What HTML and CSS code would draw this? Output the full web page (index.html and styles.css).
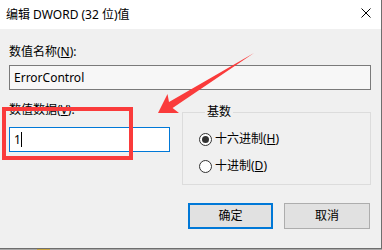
FILE: index.html
```html
<!DOCTYPE html>
<html lang="zh-CN">
<head>
<meta charset="utf-8">
<title>编辑 DWORD (32 位)值</title>
<link rel="stylesheet" href="styles.css">
</head>
<body>
<div class="window">
  <div class="titlebar">
    <span class="title">编辑 DWORD (32 位)值</span>
    <svg class="close" width="10" height="10" viewBox="0 0 10 10" aria-label="关闭"><path d="M0.5 0.5L9.5 9.5M9.5 0.5L0.5 9.5" stroke="#000" stroke-width="1" fill="none"/></svg>
  </div>
  <div class="content">
    <div class="label">数值名称(<u>N</u>):</div>
    <div class="textbox readonly">ErrorControl</div>
    <div class="row">
      <div class="col-left">
        <div class="label">数值数据(<u>V</u>):</div>
        <div class="textbox active"><span>1</span><span class="caret"></span></div>
      </div>
      <fieldset class="group">
        <legend>基数</legend>
        <label class="radio"><input type="radio" name="base" checked><span>十六进制(<u>H</u>)</span></label>
        <label class="radio"><input type="radio" name="base"><span>十进制(<u>D</u>)</span></label>
      </fieldset>
    </div>
    <div class="buttons">
      <button class="btn default">确定</button>
      <button class="btn">取消</button>
    </div>
  </div>
</div>
<div class="desk"><span class="desk-item"></span></div>
<div class="highlight"></div>
<svg class="arrow" width="382" height="250" viewBox="0 0 382 250">
  <polygon points="158,113 167.5,94 169,102 254,53 172.6,108 179,113" fill="#fa3b3b"/>
</svg>
</body>
</html>
```
FILE: styles.css
```css
html, body {
  margin: 0;
  padding: 0;
}
body {
  width: 382px;
  height: 250px;
  overflow: hidden;
  position: relative;
  background: #a8a8a8;
  font-family: "Noto Sans", "Noto Sans CJK SC", sans-serif;
  font-size: 12px;
  line-height: 16px;
  color: #000;
}
.window {
  width: 381px;
  height: 248px;
  border-right: 1px solid #6e6e6e;
  border-bottom: 1px solid #6e6e6e;
  background: #f0f0f0;
  display: flex;
  flex-direction: column;
}
.titlebar {
  height: 29px;
  flex: none;
  background: #fff;
  display: flex;
  align-items: center;
  justify-content: space-between;
  padding: 0 10px 0 6px;
}
.close {
  margin-bottom: 3px;
}
.content {
  padding: 15px 10px 0 9px;
  display: flex;
  flex-direction: column;
}
.label {
  height: 16px;
}
.textbox {
  box-sizing: border-box;
  height: 25px;
  border: 1px solid #7a7a7a;
  padding-left: 4px;
  display: flex;
  align-items: center;
  margin-top: 5px;
}
.textbox.readonly {
  background: #f7f7f7;
}
.textbox.active {
  border-color: #0078d7;
  background: #fff;
  margin-top: 9px;
}
.caret {
  width: 1px;
  height: 15px;
  background: #000;
  margin-left: 0;
}
.row {
  display: flex;
  gap: 12px;
  margin-top: 12px;
  align-items: flex-start;
}
.col-left {
  width: 161px;
  flex: none;
}
.group {
  flex: 1;
  box-sizing: border-box;
  height: 81px;
  margin: 2px 0 0 0;
  padding: 11px 0 0 16px;
  border: 1px solid #dcdcdc;
  min-width: 0;
}
.group legend {
  padding: 0 2px;
  margin-left: 6px;
  line-height: 16px;
}
.radio {
  display: flex;
  align-items: center;
  height: 16px;
  margin-bottom: 11px;
}
.radio input {
  appearance: none;
  -webkit-appearance: none;
  box-sizing: border-box;
  width: 13px;
  height: 13px;
  margin: 0 3px 0 0;
  border: 1px solid #333;
  border-radius: 50%;
  background: #fff;
  display: flex;
  align-items: center;
  justify-content: center;
}
.radio input:checked::after {
  content: "";
  width: 7px;
  height: 7px;
  border-radius: 50%;
  background: #333;
}
.buttons {
  display: flex;
  justify-content: flex-end;
  gap: 11px;
  margin-top: 18px;
  margin-right: 1px;
}
.btn {
  box-sizing: border-box;
  height: 26px;
  width: 86px;
  border: 1px solid #adadad;
  background: #e1e1e1;
  font: inherit;
  color: #000;
  padding: 0;
}
.btn.default {
  width: 85px;
  border: 2px solid #0078d7;
}
.desk {
  height: 1px;
  display: flex;
}
.desk-item {
  width: 13px;
  margin-left: 37px;
  background: #c9a640;
}
.highlight {
  position: absolute;
  left: 2px;
  top: 107px;
  width: 131px;
  height: 53px;
  box-sizing: border-box;
  border: 4px solid #fa3b3b;
}
.arrow {
  position: absolute;
  left: 0;
  top: 0;
  pointer-events: none;
}
```
